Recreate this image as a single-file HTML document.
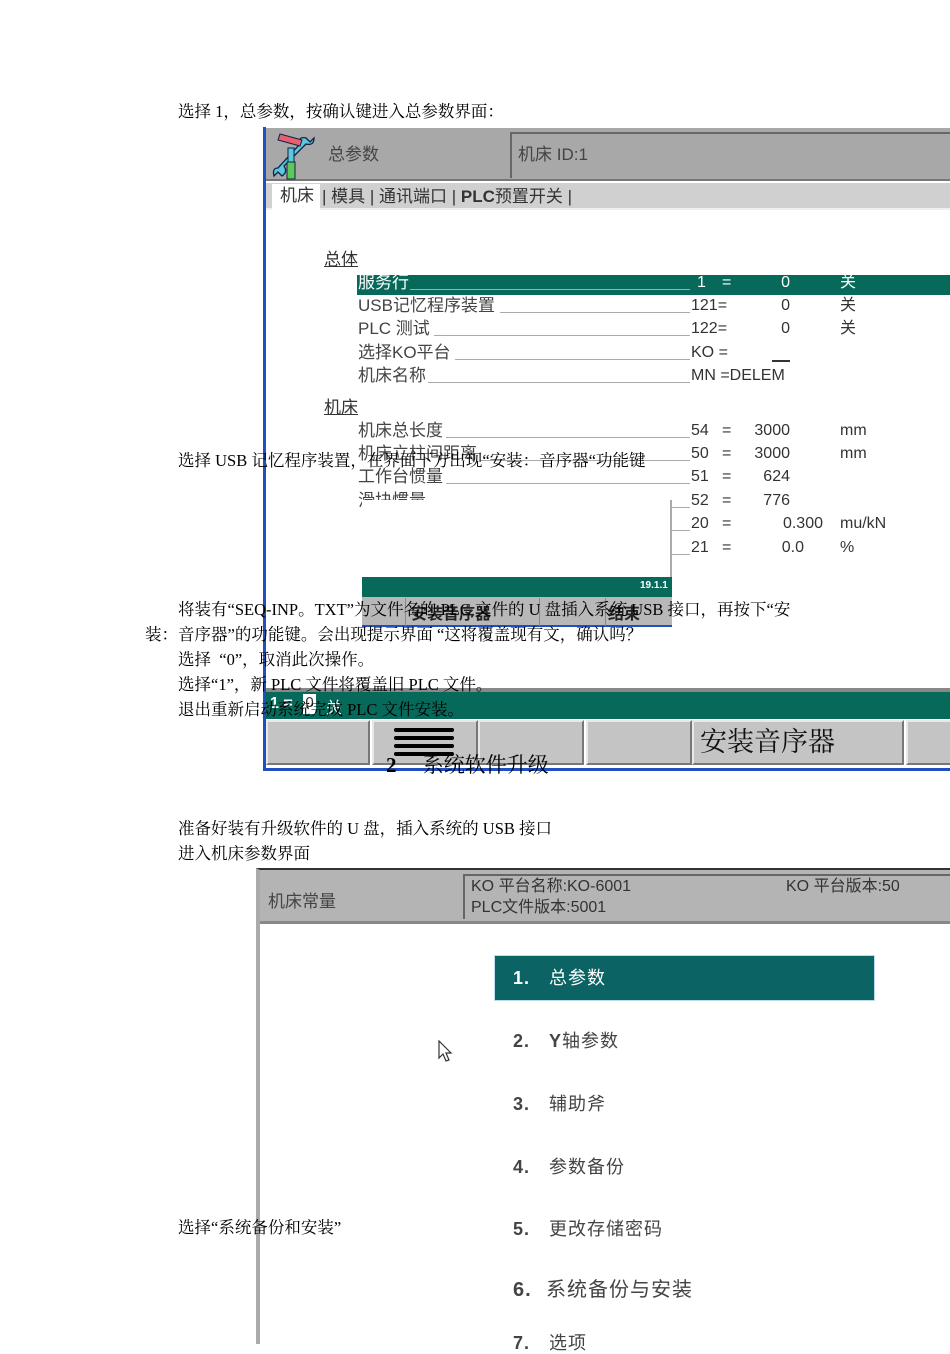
<!DOCTYPE html>
<html><head><meta charset="utf-8"><style>
*{margin:0;padding:0;box-sizing:border-box}
body{width:950px;height:1344px;background:#fff;position:relative;overflow:hidden;font-family:"Liberation Sans","Noto Sans CJK SC",sans-serif}
.a{position:absolute;white-space:nowrap}
.p{position:absolute;white-space:nowrap;font-family:"Liberation Serif","Noto Serif CJK SC",serif;font-size:16.5px;color:#000;line-height:20px;z-index:20}
.u{font-size:17px;color:#333;line-height:20px}
.lab{position:absolute;left:358px;font-size:17px;color:#444;line-height:20px;white-space:nowrap}
.ln{position:absolute;height:1px;background:#aaa}
.num{position:absolute;left:691px;font-size:16px;color:#333;line-height:20px}
.eq{position:absolute;left:722px;font-size:16px;color:#333;line-height:20px}
.val{position:absolute;font-size:16px;color:#333;line-height:20px;text-align:right;width:80px}
.unit{position:absolute;left:840px;font-size:16px;color:#333;line-height:20px}
.sk{position:absolute;top:720px;height:45px;background:#c4c4c4;border-top:2px solid #e8e8e8;border-left:2px solid #e8e8e8;border-right:2px solid #777;border-bottom:2px solid #777}
.mi{position:absolute;left:513px;font-size:18px;letter-spacing:1px;color:#444;white-space:nowrap;line-height:22px}
.mi b{display:inline-block;width:36px}
</style></head><body>

<div class="p" style="left:178px;top:102px">选择 1，总参数，按确认键进入总参数界面：</div>

<!-- screenshot 1 -->
<div class="a" style="left:263px;top:127px;width:687px;height:644px;background:#fff;border-left:3px solid #1f4fc0;border-bottom:3px solid #1f4fc0"></div>
<div class="a" style="left:266px;top:128px;width:684px;height:53px;background:#a8a8a8;border-bottom:2px solid #777"></div>
<svg class="a" style="left:270px;top:132px" width="52" height="48" viewBox="0 0 52 48">
<path d="M36 6 Q28 4 30 12 L8 36 Q2 36 4 44 L8 40 L12 44 Q18 40 14 34 L36 12 Q44 14 44 6 L40 10 L36 6Z" fill="#5bc8e0" stroke="#124" stroke-width="1.3"/>
<rect x="18" y="16" width="6" height="18" fill="#5bc8e0" stroke="#124"/>
<rect x="17" y="30" width="8" height="17" fill="#5cc85c" stroke="#124"/>
<path d="M8 8 L30 14 L32 8 L10 2Z" fill="#e86070" stroke="#124"/>
</svg>
<div class="a u" style="left:328px;top:145px;color:#444">总参数</div>
<div class="a" style="left:510px;top:132px;width:440px;height:46px;background:#a8a8a8;border-top:2px solid #666;border-left:2px solid #666"></div>
<div class="a u" style="left:518px;top:145px;color:#444">机床 ID:1</div>
<div class="a" style="left:266px;top:183px;width:684px;height:27px;background:#d0d0d0;border-bottom:2px solid #eee"></div>
<div class="a" style="left:272px;top:184px;width:48px;height:28px;background:#fff"></div>
<div class="a u" style="left:280px;top:186px;color:#333">机床</div>
<div class="a u" style="left:322px;top:187px;color:#333">| 模具 | 通讯端口 | <b>PLC</b>预置开关 |</div>

<div class="a u" style="left:324px;top:250px;text-decoration:underline">总体</div>
<div class="a" style="left:357px;top:275px;width:593px;height:20px;background:#06695a"></div>
<div class="lab" style="top:273px;color:#fff">服务行</div><div class="ln" style="left:410px;top:289px;width:280px;background:#aaa"></div>
<div class="num" style="top:273px;color:#fff;left:697px">1</div><div class="eq" style="top:273px;color:#fff">=</div><div class="val" style="left:710px;top:273px;color:#fff">0</div><div class="unit" style="top:273px;color:#fff">关</div>

<div class="lab" style="top:296px">USB记忆程序装置</div><div class="ln" style="left:500px;top:312px;width:190px"></div>
<div class="num" style="top:296px">121=</div><div class="val" style="left:710px;top:296px">0</div><div class="unit" style="top:296px">关</div>
<div class="lab" style="top:319px">PLC 测试</div><div class="ln" style="left:434px;top:335px;width:256px"></div>
<div class="num" style="top:319px">122=</div><div class="val" style="left:710px;top:319px">0</div><div class="unit" style="top:319px">关</div>
<div class="lab" style="top:343px">选择KO平台</div><div class="ln" style="left:455px;top:359px;width:235px"></div>
<div class="num" style="top:343px">KO =</div><div class="a" style="left:772px;top:360px;width:18px;height:2px;background:#333"></div>
<div class="lab" style="top:366px">机床名称</div><div class="ln" style="left:428px;top:382px;width:262px"></div>
<div class="num" style="top:366px">MN =DELEM</div>

<div class="a u" style="left:324px;top:398px;text-decoration:underline">机床</div>
<div class="lab" style="top:421px">机床总长度</div><div class="ln" style="left:446px;top:437px;width:244px"></div>
<div class="num" style="top:421px">54</div><div class="eq" style="top:421px">=</div><div class="val" style="left:710px;top:421px">3000</div><div class="unit" style="top:421px">mm</div>
<div class="lab" style="top:444px">机床立柱间距离</div><div class="ln" style="left:480px;top:460px;width:210px"></div>
<div class="num" style="top:444px">50</div><div class="eq" style="top:444px">=</div><div class="val" style="left:710px;top:444px">3000</div><div class="unit" style="top:444px">mm</div>
<div class="lab" style="top:467px">工作台惯量</div><div class="ln" style="left:446px;top:483px;width:244px"></div>
<div class="num" style="top:467px">51</div><div class="eq" style="top:467px">=</div><div class="val" style="left:710px;top:467px">624</div>
<div class="lab" style="top:491px">滑块惯量</div><div class="ln" style="left:670px;top:507px;width:20px"></div>
<div class="num" style="top:491px">52</div><div class="eq" style="top:491px">=</div><div class="val" style="left:710px;top:491px">776</div>
<div class="ln" style="left:670px;top:530px;width:20px"></div>
<div class="num" style="top:514px">20</div><div class="eq" style="top:514px">=</div><div class="val" style="left:743px;top:514px">0.300</div><div class="unit" style="top:514px">mu/kN</div>
<div class="ln" style="left:670px;top:554px;width:20px"></div>
<div class="num" style="top:538px">21</div><div class="eq" style="top:538px">=</div><div class="val" style="left:724px;top:538px">0.0</div><div class="unit" style="top:538px">%</div>

<!-- popup -->
<div class="a" style="left:362px;top:500px;width:310px;height:78px;background:#fff;border-right:2px solid #aaa"></div>
<div class="a" style="left:362px;top:597px;width:310px;height:30px;background:#b8b8b8;border-bottom:2px solid #1f4fc0"></div>
<div class="a" style="left:362px;top:577px;width:310px;height:20px;background:#06695a"></div>
<div class="a" style="left:640px;top:580px;font-size:10px;color:#fff;font-weight:bold">19.1.1</div>
<div class="a" style="left:405px;top:598px;width:135px;height:28px;border-left:1px solid #888;border-right:1px solid #888"></div>
<div class="a" style="left:605px;top:598px;width:64px;height:28px;border-left:1px solid #888"></div>
<div class="a" style="left:411px;top:600px;font-size:16px;color:#222;font-weight:bold">安装音序器</div>
<div class="a" style="left:608px;top:600px;font-size:16px;color:#222;font-weight:bold">结束</div>

<!-- bottom bar -->
<div class="a" style="left:266px;top:688px;width:684px;height:4px;background:#888"></div>
<div class="a" style="left:266px;top:692px;width:684px;height:27px;background:#06695a"></div>
<div class="a" style="left:270px;top:695px;font-size:16px;color:#fff;font-weight:bold">1 =</div>
<div class="a" style="left:303px;top:694px;width:13px;height:20px;background:#fff;color:#333;font-size:15px;text-align:center">0</div>
<div class="a" style="left:326px;top:694px;font-size:16px;color:#fff">关</div>
<div class="sk" style="left:266px;width:104px"></div>
<div class="sk" style="left:372px;width:106px"></div>
<div class="sk" style="left:478px;width:106px"></div>
<div class="sk" style="left:586px;width:106px"></div>
<div class="sk" style="left:692px;width:212px"></div>
<div class="sk" style="left:906px;width:50px"></div>
<div class="a" style="left:394px;top:728px;width:60px;height:4px;background:#000;border-radius:2px"></div>
<div class="a" style="left:394px;top:736px;width:60px;height:4px;background:#000;border-radius:2px"></div>
<div class="a" style="left:394px;top:744px;width:60px;height:4px;background:#000;border-radius:2px"></div>
<div class="a" style="left:394px;top:752px;width:60px;height:4px;background:#000;border-radius:2px"></div>
<div class="a" style="left:700px;top:720px;font-size:27px;color:#111;font-family:'Liberation Serif','Noto Serif CJK SC',serif">安装音序器</div>

<div class="p" style="left:178px;top:451px">选择 USB 记忆程序装置，在界面下方出现“安装：音序器“功能键</div>
<div class="p" style="left:178px;top:600px">将装有“SEQ-INP。TXT”为文件名的 PLC 文件的 U 盘插入系统 USB 接口，再按下“安</div>
<div class="p" style="left:145px;top:625px">装：音序器”的功能键。会出现提示界面 “这将覆盖现有文，确认吗？</div>
<div class="p" style="left:178px;top:650px">选择 &nbsp;“0”，取消此次操作。</div>
<div class="p" style="left:178px;top:675px">选择“1”，新 PLC 文件将覆盖旧 PLC 文件。</div>
<div class="p" style="left:178px;top:700px">退出重新启动系统完成 PLC 文件安装。</div>
<div class="p" style="left:386px;top:753px;font-size:21px;line-height:24px"><b>2</b>&nbsp;&nbsp;&nbsp;&nbsp;&nbsp;系统软件升级</div>
<div class="p" style="left:178px;top:819px">准备好装有升级软件的 U 盘，插入系统的 USB 接口</div>
<div class="p" style="left:178px;top:844px">进入机床参数界面</div>

<!-- screenshot 2 -->
<div class="a" style="left:256px;top:868px;width:694px;height:476px;background:#fff;border-left:4px solid #aaa;border-top:2px solid #333"></div>
<div class="a" style="left:260px;top:870px;width:690px;height:54px;background:#b4b4b4;border-bottom:3px solid #888"></div>
<div class="a" style="left:268px;top:887px;font-size:17px;color:#444">机床常量</div>
<div class="a" style="left:463px;top:874px;width:487px;height:45px;border-top:2px solid #666;border-left:2px solid #666"></div>
<div class="a" style="left:471px;top:876px;font-size:16px;color:#333;line-height:21px">KO 平台名称:KO-6001<br>PLC文件版本:5001</div>
<div class="a" style="left:786px;top:876px;font-size:16px;color:#333;line-height:21px">KO 平台版本:50</div>
<div class="a" style="left:494px;top:955px;width:381px;height:46px;background:#0b6463;border:1px solid #bde"></div>
<div class="mi" style="top:967px;color:#fff"><b>1.</b>总参数</div>
<div class="mi" style="top:1030px"><b>2.</b><span style="font-weight:bold">Y</span>轴参数</div>
<div class="mi" style="top:1093px"><b>3.</b>辅助斧</div>
<div class="mi" style="top:1156px"><b>4.</b>参数备份</div>
<div class="mi" style="top:1218px"><b>5.</b>更改存储密码</div>
<div class="mi" style="top:1279px;font-size:20px"><b style="width:33px">6.</b>系统备份与安装</div>
<div class="mi" style="top:1332px"><b>7.</b>选项</div>
<svg class="a" style="left:437px;top:1040px" width="16" height="24" viewBox="0 0 16 24"><path d="M2 1 L2 18 L6 14 L9 21 L12 20 L9 13 L14 13 Z" fill="#fff" stroke="#333" stroke-width="1.2"/></svg>
<div class="p" style="left:178px;top:1218px">选择“系统备份和安装”</div>
</body></html>
